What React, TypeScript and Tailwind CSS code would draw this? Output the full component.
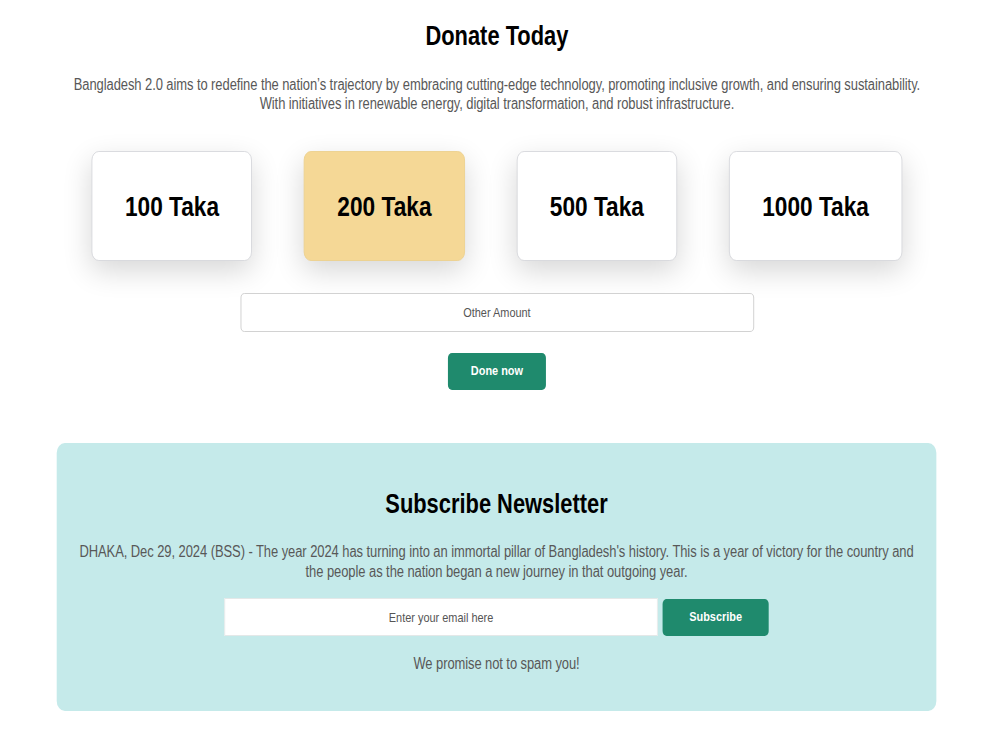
import React from "react";

const amounts = ["100 Taka", "200 Taka", "500 Taka", "1000 Taka"];

export default function App() {
  return (
    <div className="w-full overflow-hidden bg-white">
      <div className="w-[1235px] origin-top-left scale-x-[0.81] font-['Liberation_Sans',Arial,sans-serif] text-black">
        <section className="flex flex-col items-center pr-[8px] pt-[21px]">
          <h1 className="text-[27px] font-bold leading-[31px]">Donate Today</h1>
          <p className="mt-[23px] text-center text-[16px] leading-[19px] tracking-[-0.09px] text-[#585858]">
            Bangladesh 2.0 aims to redefine the nation’s trajectory by embracing cutting-edge technology, promoting inclusive growth, and ensuring sustainability.
            <br />
            With initiatives in renewable energy, digital transformation, and robust infrastructure.
          </p>
          <div className="mt-[38px] flex gap-[64px]">
            {amounts.map((a, i) => (
              <div
                key={a}
                className={`flex h-[110px] items-center justify-center rounded-[9px] border px-[40px] pt-[2px] text-[28px] font-bold shadow-[0_10px_32px_rgba(0,0,0,0.16)] ${
                  i === 1 ? "border-[#ecd08e] bg-[#f5d896]" : "border-[#d6d7dc] bg-white"
                }`}
              >
                {a}
              </div>
            ))}
          </div>
          <input
            placeholder="Other Amount"
            className="mt-[32px] h-[39px] w-[634px] rounded-[5px] border border-[#cdcdcd] bg-white text-center text-[13.5px] text-[#333] outline-none placeholder:text-[#555]"
          />
          <button className="mt-[21px] h-[37px] w-[121px] rounded-[5px] bg-[#1f8a6d] text-[13.5px] font-bold text-white">
            Done now
          </button>
        </section>
        <section className="ml-[70px] mt-[53px] flex w-[1086px] flex-col items-center rounded-[10px] bg-[#c5eaea] pb-[38px] pt-[46px]">
          <h2 className="text-[27px] font-bold leading-[31px]">Subscribe Newsletter</h2>
          <p className="mt-[22px] text-center text-[16px] leading-[20px] tracking-[-0.08px] text-[#585858]">
            DHAKA, Dec 29, 2024 (BSS) - The year 2024 has turning into an immortal pillar of Bangladesh's history. This is a year of victory for the country and
            <br />
            the people as the nation began a new journey in that outgoing year.
          </p>
          <div className="mt-[16px] flex items-center gap-[6px]">
            <input
              placeholder="Enter your email here"
              className="h-[38px] w-[535px] border border-[#e4e8e8] bg-white text-center text-[13.5px] outline-none placeholder:text-[#555]"
            />
            <button className="h-[37px] w-[131px] rounded-[5px] bg-[#1f8a6d] text-[13.5px] font-bold text-white">
              Subscribe
            </button>
          </div>
          <p className="mt-[18px] text-[16px] leading-[19px] tracking-[-0.1px] text-[#585858]">We promise not to spam you!</p>
        </section>
      </div>
    </div>
  );
}
